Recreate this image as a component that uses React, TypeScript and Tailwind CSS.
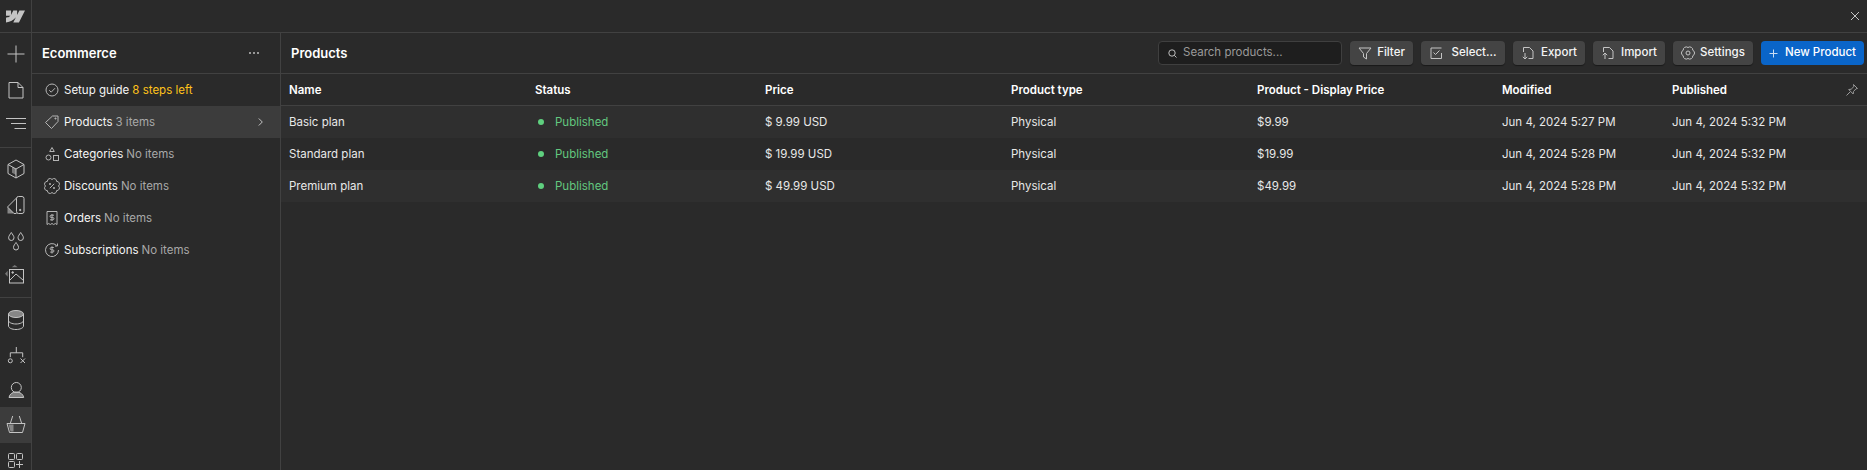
import type { ReactNode } from 'react';

const stroke = { fill: 'none', stroke: 'currentColor', strokeWidth: 1 };

function Ico({ size = 16, children }: { size?: number; children: ReactNode }) {
  return (
    <svg width={size} height={size} viewBox={`0 0 ${size} ${size}`} {...stroke} className="shrink-0">
      {children}
    </svg>
  );
}

function RailButton({ h, active, children }: { h: number; active?: boolean; children: ReactNode }) {
  return (
    <div
      className={`flex w-[31px] shrink-0 items-center justify-center text-[#c4c4c4] ${active ? 'bg-[#3c3c3c]' : ''}`}
      style={{ height: h }}
    >
      {children}
    </div>
  );
}

function Rail() {
  return (
    <div className="flex w-[32px] shrink-0 flex-col overflow-hidden border-r border-[#414141]">
      <div className="flex flex-col border-b border-[#414141] pb-[7px] pt-[3px]">
        <RailButton h={36}>
          <Ico size={18}><path d="M9 .5v17M.5 9h17" /></Ico>
        </RailButton>
        <RailButton h={36}>
          <Ico size={18}><path d="M2 1.500h9l5 5v10.500H2zM11 1.500v5h5" /></Ico>
        </RailButton>
        <RailButton h={32}>
          <Ico size={22}><path d="M1 5.500h20M6 10.500h15M9.500 15.500h11.500" /></Ico>
        </RailButton>
      </div>
      <div className="flex flex-col border-b border-[#414141] pb-[4px] pt-[3px]">
        <RailButton h={36}>
          <Ico size={20}>
            <path d="M10 1l8 4.500v9l-8 4.500-8-4.500v-9zM2 5.500l8 4.500 8-4.500M10 10v9" />
            <path d="M6 7.700l4 2.300v6l-4-2.300z" fill="currentColor" fillOpacity="0.5" stroke="none" />
          </Ico>
        </RailButton>
        <RailButton h={36}>
          <Ico size={20}>
            <rect x="10.500" y="1.500" width="7.500" height="17" rx="2" />
            <path d="M10.500 3L1.500 12l6.500 6.500h2.500" />
            <path d="M1.500 12v6.500H8z" fill="currentColor" fillOpacity="0.6" stroke="none" />
            <circle cx="14.200" cy="15" r="0.7" fill="currentColor" />
          </Ico>
        </RailButton>
        <RailButton h={35}>
          <Ico size={20}>
            <path d="M5.300 1.500c1 1.800 2.700 3.400 2.700 5.300a2.700 2.700 0 0 1-5.400 0c0-1.900 1.700-3.500 2.700-5.300zM14.700 1.500c1 1.800 2.700 3.400 2.700 5.300a2.700 2.700 0 0 1-5.400 0c0-1.900 1.700-3.500 2.700-5.300zM10 11.500c.9 1.600 2.500 3 2.500 5a2.500 2.500 0 0 1-5 0c0-2 1.600-3.400 2.500-5z" />
          </Ico>
        </RailButton>
        <RailButton h={35}>
          <Ico size={22}>
            <rect x="4.500" y="4.500" width="14" height="13.500" />
            <path d="M4.500 15.500L11 9l7.500 6.500" />
            <circle cx="7.700" cy="7.500" r="0.8" fill="currentColor" />
            <path d="M0 8.800l2.700-3v6zM6.700 2.200l3-2.200 3 2.200z" fill="currentColor" fillOpacity="0.5" stroke="none" />
          </Ico>
        </RailButton>
      </div>
      <div className="flex flex-col pt-[4px]">
        <RailButton h={36}>
          <Ico size={20}>
            <ellipse cx="10" cy="4" rx="7.500" ry="3.500" fill="currentColor" fillOpacity="0.6" />
            <path d="M2.500 4v12c0 1.900 3.400 3.500 7.500 3.500s7.500-1.600 7.500-3.500V4M2.500 10.500c0 1.900 3.400 3.500 7.500 3.500s7.500-1.600 7.500-3.500" />
          </Ico>
        </RailButton>
        <RailButton h={35}>
          <Ico size={20}>
            <path d="M10.300 1v5.800M4.300 11.200V6.800h12.400v4.400" />
            <circle cx="4.300" cy="14.800" r="2" />
            <path d="M14.500 12.500l4.500 4.500M19 12.500l-4.500 4.500" />
          </Ico>
        </RailButton>
        <RailButton h={34}>
          <Ico size={20}>
            <circle cx="10.300" cy="7.500" r="5" />
            <path d="M3 17.500c.5-3.500 3.500-5.500 7.300-5.500s6.800 2 7.400 5.500z" fill="currentColor" fillOpacity="0.55" />
          </Ico>
        </RailButton>
        <RailButton h={36} active>
          <Ico size={20}>
            <path d="M6.700 1L4.300 8.500M13.300 1l2.400 7.500M1 8.500h18l-2.500 9h-13z" />
            <path d="M2.500 9.500h5v7h-3z" fill="currentColor" fillOpacity="0.55" stroke="none" />
          </Ico>
        </RailButton>
        <RailButton h={36}>
          <Ico size={20}>
            <rect x="2.500" y="2.500" width="6" height="6" rx="1" />
            <rect x="10.500" y="2.500" width="6" height="6" rx="1" />
            <rect x="2.500" y="10.500" width="6" height="6" rx="1" />
            <path d="M13.500 10v7M10 13.500h7" />
          </Ico>
        </RailButton>
      </div>
    </div>
  );
}

const navItems: { label: string; note: string; noteClass?: string; active?: boolean; icon: ReactNode }[] = [
  {
    label: 'Setup guide',
    note: '8 steps left',
    noteClass: 'text-[#ffc21a]',
    icon: <Ico><circle cx="8" cy="8" r="6" /><path d="M5.200 8.200l2 2 3.800-4" /></Ico>,
  },
  {
    label: 'Products',
    note: '3 items',
    active: true,
    icon: <Ico><path d="M1.500 8.500L8.500 2h5.500v5.500L7.500 14.500z" /><circle cx="11.500" cy="4.500" r="0.6" fill="currentColor" /></Ico>,
  },
  {
    label: 'Categories',
    note: 'No items',
    icon: <Ico><path d="M8 1.500l2.300 4h-4.600z" /><circle cx="4.500" cy="11.500" r="2.500" /><rect x="9.500" y="9.500" width="5" height="5" /></Ico>,
  },
  {
    label: 'Discounts',
    note: 'No items',
    icon: <Ico><path d="M8 1.500A2.600 2.600 0 0 1 12.600 3.400A2.600 2.600 0 0 1 14.500 8A2.600 2.600 0 0 1 12.600 12.600A2.600 2.600 0 0 1 8 14.500A2.600 2.600 0 0 1 3.400 12.600A2.600 2.600 0 0 1 1.500 8A2.600 2.600 0 0 1 3.400 3.400A2.600 2.600 0 0 1 8 1.500z" /><path d="M5.800 10.200l4.400-4.400" /><circle cx="6" cy="6" r="0.6" fill="currentColor" /><circle cx="10" cy="10" r="0.6" fill="currentColor" /></Ico>,
  },
  {
    label: 'Orders',
    note: 'No items',
    icon: <Ico><path d="M3 1.500h10v13l-1.700-1-1.600 1L8 13.500l-1.700 1-1.600-1-1.700 1z" /><path d="M10 5.200H7.200a1.100 1.100 0 0 0 0 2.300h1.600a1.100 1.100 0 0 1 0 2.300H6M8 4v7" /></Ico>,
  },
  {
    label: 'Subscriptions',
    note: 'No items',
    icon: <Ico><path d="M12.500 3.400A6.500 6.500 0 1 0 14.500 8" /><path d="M13.500 1.500v2.500H11" /><path d="M9.800 5.500H7.300a1 1 0 0 0 0 2.300h1.500a1 1 0 0 1 0 2.300H6.200M8 4.300v7.200" /></Ico>,
  },
];

function Sidebar() {
  return (
    <div className="flex w-[249px] shrink-0 flex-col border-r border-[#414141]">
      <div className="flex h-[41px] shrink-0 items-center justify-between border-b border-[#414141] pl-[10px] pr-[21px]">
        <span className="pt-[1px] text-[13px] font-semibold text-white">Ecommerce</span>
        <span className="flex gap-[2px]">
          <i className="h-[2px] w-[2px] rounded-full bg-[#bdbdbd]" />
          <i className="h-[2px] w-[2px] rounded-full bg-[#bdbdbd]" />
          <i className="h-[2px] w-[2px] rounded-full bg-[#bdbdbd]" />
        </span>
      </div>
      <div className="flex flex-col">
        {navItems.map((n) => (
          <div
            key={n.label}
            className={`flex h-[32px] items-center pl-[12px] pr-[17px] text-[11.5px] ${n.active ? 'bg-[#3c3c3c]' : ''}`}
          >
            <span className="text-[#b5b5b5]">{n.icon}</span>
            <span className="ml-[4px] pt-[2px] text-[#f5f5f5]">{n.label}</span>
            <span className={`ml-[3px] pt-[2px] ${n.noteClass ?? 'text-[#a8a8a8]'}`}>{n.note}</span>
            {n.active && (
              <svg width="5" height="8" viewBox="0 0 5 8" {...stroke} className="ml-auto text-[#c4c4c4]">
                <path d="M.8.5L4.300 4 .8 7.500" />
              </svg>
            )}
          </div>
        ))}
      </div>
    </div>
  );
}

function ToolButton({ icon, label, className, gap }: { icon: ReactNode; label: string; className: string; gap: string }) {
  return (
    <button
      className={`flex h-[24px] items-center justify-center rounded-[4px] bg-[#444444] text-[11.5px] font-medium text-[#f5f5f5] shadow-[0_1px_1px_rgba(0,0,0,0.4)] ${gap} ${className}`}
    >
      <span className="text-[#c4c4c4]">{icon}</span>
      {label}
    </button>
  );
}

const columns = [
  { name: 'Name', w: 'w-[246px]' },
  { name: 'Status', w: 'w-[230px]' },
  { name: 'Price', w: 'w-[246px]' },
  { name: 'Product type', w: 'w-[246px]' },
  { name: 'Product - Display Price', w: 'w-[245px]' },
  { name: 'Modified', w: 'w-[170px]' },
  { name: 'Published', w: 'flex-1' },
];

const rows = [
  { name: 'Basic plan', price: '$ 9.99 USD', display: '$9.99', modified: 'Jun 4, 2024 5:27 PM' },
  { name: 'Standard plan', price: '$ 19.99 USD', display: '$19.99', modified: 'Jun 4, 2024 5:28 PM' },
  { name: 'Premium plan', price: '$ 49.99 USD', display: '$49.99', modified: 'Jun 4, 2024 5:28 PM' },
];

function Main() {
  return (
    <div className="flex min-w-0 flex-1 flex-col">
      <div className="flex h-[41px] shrink-0 items-center gap-[8px] border-b border-[#414141] pl-[10px] pr-[3px]">
        <span className="mr-auto pt-[1px] text-[13px] font-semibold text-white">Products</span>
        <div className="flex h-[24px] w-[184px] items-center rounded-[4px] border border-[#3f3f3f] bg-[#1e1e1e] pl-[9px] text-[11.5px] text-[#9a9a9a]">
          <svg width="9" height="9" viewBox="0 0 9 9" {...stroke} className="mr-[6px] text-[#bdbdbd]">
            <circle cx="4" cy="4" r="3.200" /><path d="M6.300 6.300l2.200 2.200" />
          </svg>
          Search products...
        </div>
        <ToolButton
          className="w-[63px]"
          gap="gap-[5px]"
          label="Filter"
          icon={<Ico size={14}><path d="M1 2h12L8.500 7.500V13l-3-2V7.500z" /></Ico>}
        />
        <ToolButton
          className="w-[84px]"
          gap="gap-[10px]"
          label="Select..."
          icon={<Ico size={12}><path d="M11.500 1H1v10.500h10.500V6" /><path d="M3.500 5.500l2 2 4-4" /></Ico>}
        />
        <ToolButton
          className="w-[72px]"
          gap="gap-[6px]"
          label="Export"
          icon={<Ico size={14}><path d="M2.500 6V1.500h6l3.500 3.500v7.500H7.500" /><path d="M4 7v6M1.800 10.800L4 13l2.200-2.200" /></Ico>}
        />
        <ToolButton
          className="w-[72px]"
          gap="gap-[6px]"
          label="Import"
          icon={<Ico size={14}><path d="M2.500 6V1.500h6l3.500 3.500v7.500H7.500" /><path d="M4 13V7M1.800 9.200L4 7l2.200 2.200" /></Ico>}
        />
        <ToolButton
          className="w-[80px]"
          gap="gap-[5px]"
          label="Settings"
          icon={<Ico size={14}><path d="M7 1.500A3 3 0 0 1 11.760 4.250A3 3 0 0 1 11.760 9.750A3 3 0 0 1 7 12.500A3 3 0 0 1 2.240 9.750A3 3 0 0 1 2.240 4.250A3 3 0 0 1 7 1.500z" /><circle cx="7" cy="7" r="2" /></Ico>}
        />
        <button className="flex h-[24px] w-[103px] items-center justify-center gap-[7px] rounded-[4px] bg-[#0a65c9] text-[11.5px] font-medium text-white">
          <svg width="9" height="9" viewBox="0 0 9 9" {...stroke} className="text-[#c9dcf3]"><path d="M4.500 .5v8M.5 4.500h8" /></svg>
          New Product
        </button>
      </div>
      <div className="flex h-[32px] shrink-0 items-center border-b border-[#414141] pl-[8px] pr-[8px] text-[11.5px] font-semibold text-white">
        {columns.map((c) => (
          <div key={c.name} className={`pt-[2px] ${c.w}`}>{c.name}</div>
        ))}
        <svg width="14" height="14" viewBox="0 0 14 14" {...stroke} className="text-[#9a9a9a]">
          <path d="M8.500 1.500l4 4-1.500.3-2.500 2.700-.3 2.500-4.500-4.500 2.500-.3L8.900 3.500zM5 9l-3.500 3.500" />
        </svg>
      </div>
      {rows.map((r, i) => (
        <div
          key={r.name}
          className={`flex h-[32px] shrink-0 items-center pl-[8px] pt-[2px] text-[11.5px] text-[#e8e8e8] ${i % 2 === 0 ? 'bg-[#2f2f2f]' : ''}`}
        >
          <div className="w-[246px]">{r.name}</div>
          <div className="flex w-[230px] items-center pl-[3px] text-[#63c77f]">
            <i className="mb-[2px] mr-[11px] h-[6px] w-[6px] rounded-full bg-[#5fd07f]" />
            Published
          </div>
          <div className="w-[246px]">{r.price}</div>
          <div className="w-[246px]">Physical</div>
          <div className="w-[245px]">{r.display}</div>
          <div className="w-[170px]">{r.modified}</div>
          <div>Jun 4, 2024 5:32 PM</div>
        </div>
      ))}
    </div>
  );
}

export default function App() {
  return (
    <div
      className="flex h-[470px] w-[1867px] flex-col overflow-hidden bg-[#2a2a2a]"
      style={{ fontFamily: 'Inter, "Liberation Sans", sans-serif' }}
    >
      <div className="flex h-[33px] shrink-0 items-center justify-between border-b border-[#414141]">
        <div className="flex h-full w-[32px] items-center justify-center border-r border-[#414141]">
          <svg width="19" height="19" viewBox="0 0 24 24" fill="#c4c4c4">
            <path d="M24 4.515l-7.658 14.970H9.149l3.205-6.204h-.144C9.566 16.713 5.621 18.973 0 19.485v-6.118s3.596-.213 5.710-2.435H0V4.515h6.417v5.278l.144-.001 2.622-5.277h4.854v5.244h.144l2.720-5.244H24z" />
          </svg>
        </div>
        <svg width="12" height="12" viewBox="0 0 12 12" {...stroke} className="mr-[6px] text-[#c4c4c4]">
          <path d="M2 2l8 8M10 2l-8 8" />
        </svg>
      </div>
      <div className="flex min-h-0 flex-1">
        <Rail />
        <Sidebar />
        <Main />
      </div>
    </div>
  );
}
